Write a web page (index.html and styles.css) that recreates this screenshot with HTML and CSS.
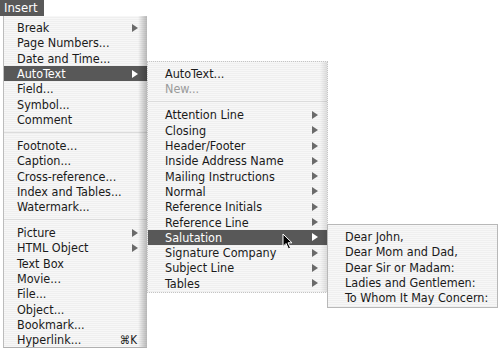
FILE: index.html
```html
<!DOCTYPE html>
<html lang="en">
<head>
    <meta charset="UTF-8">
    <title>Insert menu</title>
    <link rel="stylesheet" href="styles.css">
</head>
<body>
<div class="bar"><span class="bar-title">Insert</span></div>

<div class="menu main">
    <ul>
        <li class="item">Break<span class="arrow"></span></li>
        <li class="item">Page Numbers...</li>
        <li class="item">Date and Time...</li>
        <li class="item current">AutoText<span class="arrow"></span></li>
        <li class="item">Field...</li>
        <li class="item">Symbol...</li>
        <li class="item">Comment</li>
    </ul>
    <ul>
        <li class="item">Footnote...</li>
        <li class="item">Caption...</li>
        <li class="item">Cross-reference...</li>
        <li class="item">Index and Tables...</li>
        <li class="item">Watermark...</li>
    </ul>
    <ul>
        <li class="item">Picture<span class="arrow"></span></li>
        <li class="item">HTML Object<span class="arrow"></span></li>
        <li class="item">Text Box</li>
        <li class="item">Movie...</li>
        <li class="item">File...</li>
        <li class="item">Object...</li>
        <li class="item">Bookmark...</li>
        <li class="item">Hyperlink...<span class="key">&#8984;K</span></li>
    </ul>

    <!-- AutoText submenu -->
    <div class="menu sub">
        <ul>
            <li class="item">AutoText...</li>
            <li class="item disabled">New...</li>
        </ul>
        <ul>
            <li class="item">Attention Line<span class="arrow"></span></li>
            <li class="item">Closing<span class="arrow"></span></li>
            <li class="item">Header/Footer<span class="arrow"></span></li>
            <li class="item">Inside Address Name<span class="arrow"></span></li>
            <li class="item">Mailing Instructions<span class="arrow"></span></li>
            <li class="item">Normal<span class="arrow"></span></li>
            <li class="item">Reference Initials<span class="arrow"></span></li>
            <li class="item">Reference Line<span class="arrow"></span></li>
            <li class="item current">Salutation<span class="arrow"></span></li>
            <li class="item">Signature Company<span class="arrow"></span></li>
            <li class="item">Subject Line<span class="arrow"></span></li>
            <li class="item">Tables<span class="arrow"></span></li>
        </ul>
    </div>

    <!-- Salutation submenu -->
    <div class="menu sub2">
        <ul>
            <li class="item">Dear John,</li>
            <li class="item">Dear Mom and Dad,</li>
            <li class="item">Dear Sir or Madam:</li>
            <li class="item">Ladies and Gentlemen:</li>
            <li class="item">To Whom It May Concern:</li>
        </ul>
    </div>

    <svg class="cursor" width="12" height="17" viewBox="0 0 12 17">
        <path d="M1 1 L1 13.5 L4 10.5 L6.5 16 L8.5 15 L6 9.8 L10 9.8 Z" fill="#000" stroke="#fff" stroke-width="1"/>
    </svg>
</div>
</body>
</html>
```

FILE: styles.css
```css
* {
    padding: 0;
    margin: 0;
    list-style: none;
    border: 0;
    box-sizing: border-box;
}

body {
    background: #fff;
    width: 500px;
    height: 349px;
    overflow: hidden;
    font-family: "DejaVu Sans Condensed", "DejaVu Sans", sans-serif;
    font-size: 12.5px;
    color: #1a1a1a;
}

.bar {
    height: 16px;
}

.bar-title {
    display: inline-block;
    width: 44px;
    height: 16px;
    line-height: 16px;
    padding-left: 4px;
    background: #595959;
    color: #fff;
    font-size: 13px;
}

.menu {
    background: #f5f5f5 repeating-linear-gradient(to bottom, #f7f7f7 0, #f7f7f7 1px, #efefef 1px, #efefef 2px);
}

.main {
    position: relative;
    width: 144px;
    margin-left: 3px;
    height: 332px;
    padding: 4px 0 2px;
    border-left: 1px solid #bcbcbc;
    border-bottom: 1px solid #b0b0b0;
}

.main::after {
    content: "";
    position: absolute;
    top: 0;
    right: 0;
    bottom: 0;
    width: 9px;
    background: linear-gradient(to right, rgba(0, 0, 0, 0), rgba(0, 0, 0, 0.25));
}

.menu ul + ul {
    margin-top: 4.7px;
    padding-top: 5px;
    border-top: 1px solid #dcdcdc;
}

.item {
    display: flex;
    align-items: center;
    height: 15.3px;
    padding: 0 9px 0 13px;
    white-space: nowrap;
}

.item.current {
    background: #585858;
    color: #fff;
}

.item.disabled {
    color: #9a9a9a;
}

.arrow {
    margin-left: auto;
    width: 0;
    height: 0;
    border-left: 6px solid #6a6a6a;
    border-top: 4px solid transparent;
    border-bottom: 4px solid transparent;
}

.current .arrow {
    border-left-color: #fff;
}

.key {
    margin-left: auto;
    padding-right: 1px;
    font-size: 11.5px;
}

.sub {
    position: absolute;
    left: 143px;
    top: 45px;
    width: 181px;
    height: 232px;
    padding: 4px 0 3px;
    border: 1px dotted #c4c4c4;
    z-index: 2;
}

.sub .item {
    padding-left: 17px;
}

.sub::after {
    content: "";
    position: absolute;
    top: 0;
    right: 0;
    bottom: 0;
    width: 7px;
    background: linear-gradient(to right, rgba(0, 0, 0, 0), rgba(0, 0, 0, 0.1));
}

.sub2 {
    position: absolute;
    left: 323px;
    top: 208px;
    width: 171px;
    height: 84px;
    padding: 4px 0 2px;
    border: 1px solid #b8b8b8;
    z-index: 3;
}

.sub2 .item {
    padding-left: 17px;
}

.cursor {
    position: absolute;
    left: 278px;
    top: 217px;
    z-index: 4;
}
```
